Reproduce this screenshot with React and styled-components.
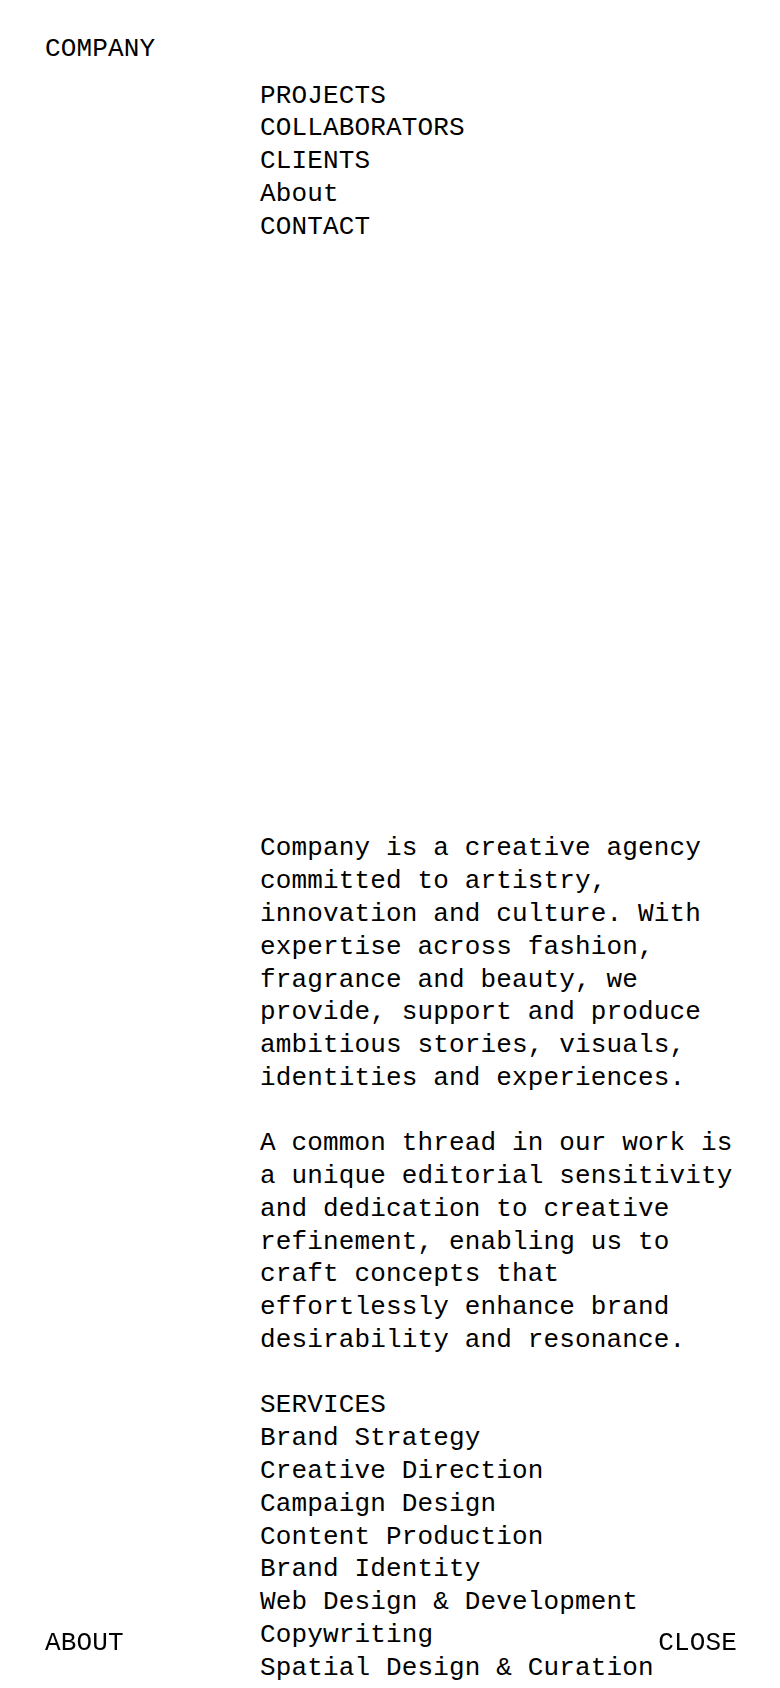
import React from 'react'
import styled, { createGlobalStyle } from 'styled-components'

const GlobalStyle = createGlobalStyle`
  html, body {
    margin: 0;
    padding: 0;
    background: #fff;
  }
  body {
    color: #000;
    font-family: "Liberation Mono", "DejaVu Sans Mono", monospace;
    font-size: 26px;
    letter-spacing: 0.15px;
    line-height: 32.76px;
    -webkit-font-smoothing: antialiased;
  }
`

const Page = styled.div`
  display: grid;
  grid-template-columns: 215px 1fr;
  padding: 32.6px 38px 0 45px;
`

const Logo = styled.a`
  grid-column: 1 / -1;
  color: inherit;
  text-decoration: none;
`

const Nav = styled.nav`
  grid-column: 2;
  display: flex;
  flex-direction: column;
  margin-top: 14.3px;
`

const NavLink = styled.a`
  color: inherit;
  text-decoration: none;
`

const Main = styled.main`
  grid-column: 2;
  margin-top: 589px;
`

const Text = styled.p`
  margin: 0 0 32.76px;
`

const List = styled.ul`
  list-style: none;
  margin: 0;
  padding: 0;
`

const Item = styled.li``

const Footer = styled.footer`
  position: fixed;
  left: 0;
  right: 0;
  bottom: 28.6px;
  display: flex;
  justify-content: space-between;
  padding: 0 43px 0 45px;
`

const FooterLink = styled.a`
  color: inherit;
  text-decoration: none;
`

const navItems = ['PROJECTS', 'COLLABORATORS', 'CLIENTS', 'About', 'CONTACT']

const services = [
  'Brand Strategy',
  'Creative Direction',
  'Campaign Design',
  'Content Production',
  'Brand Identity',
  'Web Design & Development',
  'Copywriting',
  'Spatial Design & Curation',
]

export default function App() {
  return (
    <>
      <GlobalStyle />
      <Page>
        <Logo href="#">COMPANY</Logo>
        <Nav>
          {navItems.map((item) => (
            <NavLink key={item} href="#">
              {item}
            </NavLink>
          ))}
        </Nav>
        <Main>
          <Text>
            Company is a creative agency committed to artistry, innovation and
            culture. With expertise across fashion, fragrance and beauty, we
            provide, support and produce ambitious stories, visuals, identities
            and experiences.
          </Text>
          <Text>
            A common thread in our work is a unique editorial sensitivity and
            dedication to creative refinement, enabling us to craft concepts
            that effortlessly enhance brand desirability and resonance.
          </Text>
          <List>
            <Item>SERVICES</Item>
            {services.map((s) => (
              <Item key={s}>{s}</Item>
            ))}
          </List>
        </Main>
      </Page>
      <Footer>
        <FooterLink href="#">ABOUT</FooterLink>
        <FooterLink href="#">CLOSE</FooterLink>
      </Footer>
    </>
  )
}
